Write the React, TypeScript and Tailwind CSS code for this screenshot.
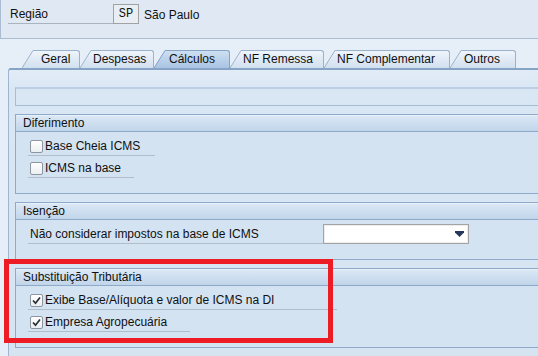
const tabs = [
  { label: 'Geral', w: 'w-[47px]', pl: 'pl-[8px]', active: false },
  { label: 'Despesas', w: 'w-[63px]', pl: 'pl-[2px]', active: false },
  { label: 'Cálculos', w: 'w-[65px]', pl: 'pl-[4px]', active: true },
  { label: 'NF Remessa', w: 'w-[83px]', pl: 'pl-[2px]', active: false },
  { label: 'NF Complementar', w: 'w-[115px]', pl: 'pl-[2px]', active: false },
  { label: 'Outros', w: 'w-[55px]', pl: 'pl-[3px]', active: false },
];

function Slant({ active }: { active: boolean }) {
  const id = active ? 'tab-grad-on' : 'tab-grad-off';
  return (
    <svg width="11" height="18" className="block shrink-0">
      <defs>
        <linearGradient id={id} x1="0" y1="0" x2="0" y2="1">
          <stop offset="0" stopColor={active ? '#cddff2' : '#eef4fb'} />
          <stop offset="1" stopColor={active ? '#a9c4e3' : '#d2e0ef'} />
        </linearGradient>
      </defs>
      <polygon points="0,18 11,0 11,18" fill={`url(#${id})`} />
      <line x1="0" y1="18" x2="11" y2="0.5" stroke={active ? '#86a2c4' : '#9bb2cc'} strokeWidth="1" />
    </svg>
  );
}

function Checkbox({ checked }: { checked?: boolean }) {
  return (
    <span className="w-[13px] h-[13px] shrink-0 rounded-[2px] border border-[#8e969f] bg-linear-to-b from-[#ffffff] to-[#eceff2] flex items-center justify-center">
      {checked && (
        <svg width="11" height="11" viewBox="0 0 11 11">
          <polyline points="2,5.5 4.5,8.2 9,2.5" fill="none" stroke="#2b2f36" strokeWidth="1.7" />
        </svg>
      )}
    </span>
  );
}

function CheckRow({ label, checked, w }: { label: string; checked?: boolean; w: string }) {
  return (
    <div className={`${w} ml-[12px] h-[22px] pl-[2px] pb-[2px] border-b border-[#b3bdc9] flex items-end gap-[2px]`}>
      <Checkbox checked={checked} />
      <span className="leading-[13px] whitespace-nowrap">{label}</span>
    </div>
  );
}

function Group({ title, children, className = '' }: { title: string; children: React.ReactNode; className?: string }) {
  return (
    <div className={`border border-[#8fa9c8] bg-[#d4e3f2] ${className}`}>
      <div className="h-[17px] border-b border-[#8fa9c8] bg-linear-to-b from-[#dce9f6] to-[#c1d5ea] pl-[7px] leading-[16px] shadow-[inset_0_1px_0_#e8f0f9]">
        {title}
      </div>
      {children}
    </div>
  );
}

export default function App() {
  return (
    <div className="relative w-[538px] h-[356px] overflow-hidden bg-[#e6eef7] text-[12px] text-[#101010] [font-family:'Liberation_Sans',Arial,sans-serif]">
      {/* header fields */}
      <div className="h-[39px] bg-[#dfe8f3] border-b border-l border-[#aabdd3] pt-[4px]">
        <div className="flex items-stretch h-[20px]">
          <div className="w-[105px] ml-[7px] pl-[2px] pb-[2px] border-b border-[#a9b4c1] flex items-end">
            <span className="leading-[13px]">Região</span>
          </div>
          <div className="w-[26px] h-[20px] border border-[#a2a2a2] bg-[#e9eef4] flex items-center justify-center [font-family:'Liberation_Mono',monospace] text-[12px] leading-[18px]">
            SP
          </div>
          <div className="ml-[5px] pb-[2px] flex items-end">
            <span className="leading-[13px]">São Paulo</span>
          </div>
        </div>
      </div>

      {/* tabs */}
      <div className="mt-[11px] pl-[22px] flex items-end h-[18px]">
        {tabs.map(t => (
          <div key={t.label} className="flex items-end">
            <Slant active={t.active} />
            <div
              className={`${t.w} ${t.pl} h-[18px] border-t border-r rounded-tr-[3px] leading-[16px] whitespace-nowrap ${
                t.active
                  ? 'border-[#86a2c4] bg-linear-to-b from-[#cddff2] to-[#a9c4e3]'
                  : 'border-[#9bb2cc] bg-linear-to-b from-[#eef4fb] to-[#d2e0ef]'
              }`}
            >
              {t.label}
            </div>
          </div>
        ))}
      </div>

      {/* panel */}
      <div className="ml-[8px] w-[600px] h-[300px] border-l border-t-2 border-[#87a3c6] border-l-[#9fb5cf] rounded-tl-[3px] bg-[linear-gradient(#e2ecf7_0px,#d9e6f4_20px,#d6e4f2_100%)] pt-[17px] pl-[6px]">
        <div className="h-[19px] border border-[#a7bdd6] border-t-2 border-t-[#bccee3] bg-[#d9e6f4]" />

        <Group title="Diferimento" className="mt-[8px]">
          <div className="pt-[2px] pb-[15px]">
            <CheckRow label="Base Cheia ICMS" w="w-[127px]" />
            <CheckRow label="ICMS na base" w="w-[106px]" />
          </div>
        </Group>

        <Group title="Isenção" className="mt-[8px]">
          <div className="pt-[4px] pb-[15px] flex items-stretch h-[39px]">
            <div className="w-[295px] ml-[12px] pl-[2px] pb-[2px] border-b border-[#b3bdc9] flex items-end">
              <span className="leading-[13px] whitespace-nowrap">Não considerar impostos na base de ICMS</span>
            </div>
            <div className="w-[146px] h-[20px] border border-[#a3a3a3] bg-white shadow-[inset_0_0_0_1px_#ededed] flex items-center justify-end pr-[4px]">
              <svg width="9" height="6" viewBox="0 0 9 6">
                <path d="M0 0h9v1.5L4.5 6 0 1.5z" fill="#26375c" />
              </svg>
            </div>
          </div>
        </Group>

        <Group title="Substituição Tributária" className="mt-[8px]">
          <div className="pt-[2px] pb-[15px]">
            <CheckRow label="Exibe Base/Alíquota e valor de ICMS na DI" checked w="w-[309px]" />
            <CheckRow label="Empresa Agropecuária" checked w="w-[162px]" />
          </div>
        </Group>
      </div>

      {/* red highlight annotation */}
      <div className="absolute left-[4px] top-[259px] w-[329px] h-[84px] border-[5px] border-[#ed1c24]" />
    </div>
  );
}
